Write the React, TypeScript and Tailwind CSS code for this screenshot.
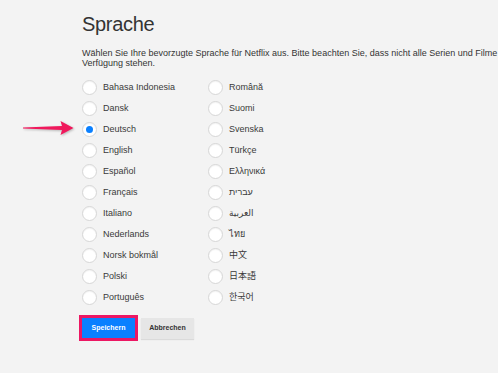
import React, { useState } from 'react';

const left = ['Bahasa Indonesia', 'Dansk', 'Deutsch', 'English', 'Español', 'Français', 'Italiano', 'Nederlands', 'Norsk bokmål', 'Polski', 'Português'];
const right = ['Română', 'Suomi', 'Svenska', 'Türkçe', 'Ελληνικά', 'עברית', 'العربية', 'ไทย', '中文', '日本語', '한국어'];

const Radio: React.FC<{ label: string; checked: boolean; onPick: () => void }> = ({ label, checked, onPick }) => (
  <label onClick={onPick} className="flex h-[21px] items-center gap-[6px] cursor-pointer">
    <span className="flex h-[15px] w-[15px] shrink-0 items-center justify-center rounded-full border border-[#d6d6d6] bg-white shadow-[inset_0_1px_1px_rgba(0,0,0,0.05)]">
      {checked && <span className="h-[7px] w-[7px] rounded-full bg-[#0a80ff]" />}
    </span>
    <span className="text-[9px] leading-none text-[#3a3a3a]">{label}</span>
  </label>
);

export default function App() {
  const [lang, setLang] = useState('Deutsch');
  return (
    <div
      className="relative min-h-screen w-full overflow-hidden bg-[#f3f3f3]"
      style={{ fontFamily: '"Liberation Sans", "DejaVu Sans", "Noto Sans CJK JP", "Noto Sans CJK KR", sans-serif' }}
    >
      <div className="pl-[82px] pt-[12px]">
        <h1 className="text-[20px] leading-[24px] tracking-[-0.3px] text-[#333]">Sprache</h1>
        {/* the first line runs past the window edge, as in the reference */}
        <p className="mt-[12px] whitespace-nowrap text-[9px] leading-[10px] text-[#333]">
          Wählen Sie Ihre bevorzugte Sprache für Netflix aus. Bitte beachten Sie, dass nicht alle Serien und Filme in Ihrer bevorzugten Sprache zur
          <br />
          Verfügung stehen.
        </p>
        <div className="mt-[9px] flex">
          <div className="flex w-[126px] flex-col">
            {left.map((l) => (
              <Radio key={l} label={l} checked={lang === l} onPick={() => setLang(l)} />
            ))}
          </div>
          <div className="flex flex-col">
            {right.map((l) => (
              <Radio key={l} label={l} checked={lang === l} onPick={() => setLang(l)} />
            ))}
          </div>
        </div>
        <div className="mt-[7px] flex items-center">
          <div className="-ml-[3px] border-[3px] border-[#ec1763]">
            <button className="flex h-[20px] w-[53px] items-center justify-center bg-[#0a80ff] text-[7px] font-bold text-white">Speichern</button>
          </div>
          <button className="ml-[3px] flex h-[21px] w-[53px] items-center justify-center bg-[#e6e6e6] text-[7px] font-bold text-[#333] shadow-[0_1px_1px_rgba(0,0,0,0.1)]">Abbrechen</button>
        </div>
      </div>
      {/* annotation arrow pointing at the selected option */}
      <svg className="absolute left-[23px] top-[120px] drop-shadow-[1px_1px_1px_rgba(0,0,0,0.25)]" width="51" height="16" viewBox="0 0 51 16">
        <polygon points="0,7.4 39,6 37.5,1 50.5,8 37.5,15 39,10 0,8.6" fill="#f0185c" />
      </svg>
    </div>
  );
}
